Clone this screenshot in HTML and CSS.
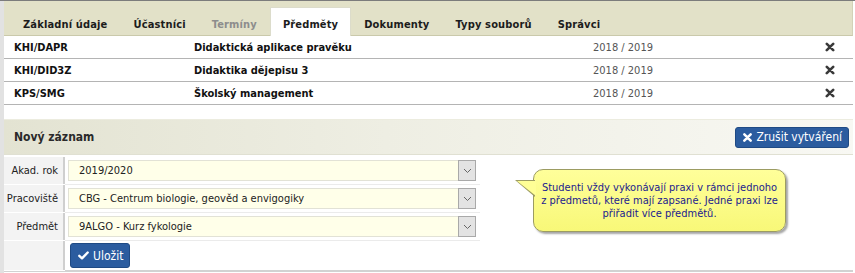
FILE: index.html
```html
<!DOCTYPE html>
<html lang="cs">
<head>
<meta charset="utf-8">
<title>Předměty</title>
<link rel="stylesheet" href="styles.css">
</head>
<body>
<div class="page">
  <nav class="tabs">
    <span class="tab">Základní údaje</span>
    <span class="tab">Účastníci</span>
    <span class="tab disabled">Termíny</span>
    <span class="tab active">Předměty</span>
    <span class="tab">Dokumenty</span>
    <span class="tab">Typy souborů</span>
    <span class="tab">Správci</span>
  </nav>

  <div class="list">
    <div class="row">
      <span class="code">KHI/DAPR</span>
      <span class="name">Didaktická aplikace pravěku</span>
      <span class="year">2018 / 2019</span>
      <span class="del"><svg width="10" height="10" viewBox="0 0 10 10"><path d="M1.8 1.8L8.2 8.2M8.2 1.8L1.8 8.2" stroke="#3a3a3a" stroke-width="2.6" stroke-linecap="round"/></svg></span>
    </div>
    <div class="row">
      <span class="code">KHI/DID3Z</span>
      <span class="name">Didaktika dějepisu 3</span>
      <span class="year">2018 / 2019</span>
      <span class="del"><svg width="10" height="10" viewBox="0 0 10 10"><path d="M1.8 1.8L8.2 8.2M8.2 1.8L1.8 8.2" stroke="#3a3a3a" stroke-width="2.6" stroke-linecap="round"/></svg></span>
    </div>
    <div class="row">
      <span class="code">KPS/SMG</span>
      <span class="name">Školský management</span>
      <span class="year">2018 / 2019</span>
      <span class="del"><svg width="10" height="10" viewBox="0 0 10 10"><path d="M1.8 1.8L8.2 8.2M8.2 1.8L1.8 8.2" stroke="#3a3a3a" stroke-width="2.6" stroke-linecap="round"/></svg></span>
    </div>
  </div>

  <section class="new">
    <header class="new-head">
      <h2 class="new-title">Nový záznam</h2>
      <button class="btn btn-cancel"><svg width="9" height="9" viewBox="0 0 10 10"><path d="M1.5 1.5L8.5 8.5M8.5 1.5L1.5 8.5" stroke="#fff" stroke-width="2.8" stroke-linecap="round"/></svg>Zrušit vytváření</button>
    </header>
    <div class="new-body">
      <div class="form">
        <div class="frow">
          <div class="flabel">Akad. rok</div>
          <div class="fval"><div class="select"><span class="sel-text">2019/2020</span><span class="sel-arrow"><svg width="9" height="6" viewBox="0 0 9 6"><path d="M1 1L4.5 4.5L8 1" fill="none" stroke="#666" stroke-width="1"/></svg></span></div></div>
        </div>
        <div class="frow">
          <div class="flabel">Pracoviště</div>
          <div class="fval"><div class="select"><span class="sel-text">CBG - Centrum biologie, geověd a envigogiky</span><span class="sel-arrow"><svg width="9" height="6" viewBox="0 0 9 6"><path d="M1 1L4.5 4.5L8 1" fill="none" stroke="#666" stroke-width="1"/></svg></span></div></div>
        </div>
        <div class="frow">
          <div class="flabel">Předmět</div>
          <div class="fval"><div class="select"><span class="sel-text">9ALGO - Kurz fykologie</span><span class="sel-arrow"><svg width="9" height="6" viewBox="0 0 9 6"><path d="M1 1L4.5 4.5L8 1" fill="none" stroke="#666" stroke-width="1"/></svg></span></div></div>
        </div>
        <div class="frow last">
          <div class="flabel"></div>
          <div class="fval"><button class="btn btn-save"><svg width="11" height="9" viewBox="0 0 11 9"><path d="M1.3 4.8L4 7.3L9.7 1.5" fill="none" stroke="#fff" stroke-width="2.4" stroke-linecap="round" stroke-linejoin="round"/></svg>Uložit</button></div>
        </div>
      </div>
      <div class="tip">
        <span class="tip-line">Studenti vždy vykonávají praxi v rámci jednoho</span>
        <span class="tip-line">z předmetů, které mají zapsané. Jedné praxi lze</span>
        <span class="tip-line">přiřadit více předmětů.</span>
      </div>
    </div>
  </section>
</div>
</body>
</html>
```

FILE: styles.css
```css
* { box-sizing: border-box; }

html, body {
  margin: 0;
  padding: 0;
  background: #fff;
}

body {
  font-family: "DejaVu Sans Condensed", "DejaVu Sans", sans-serif;
  font-stretch: condensed;
  font-size: 11px;
  color: #111;
  border-top: 1px solid #7c7c7c;
  height: 273px;
  overflow: hidden;
}

.page {
  width: 853px;
  border-left: 4px solid #e2e2e2;
  min-height: 272px;
}

/* Tabs */
.tabs {
  display: flex;
  background: #e2e1c8;
  border-bottom: 1px solid #cac9ab;
  border-right: 1px solid #d3d2b8;
  padding: 6px 0 0 6px;
  height: 35px;
}

.tab {
  display: block;
  padding: 10px 12px 3px;
  line-height: 14px;
  border: 1px solid transparent;
  border-bottom: 0;
  font-weight: bold;
  letter-spacing: 0.15px;
  color: #1c1c1c;
  white-space: nowrap;
}

.tab.disabled { color: #8d8d8d; }

.tab.active {
  background: #fff;
  border-color: #dcdccb;
  margin-bottom: -1px;
  position: relative;
}

/* List */
.list { display: block; }

.row {
  display: grid;
  grid-template-columns: 180px 399px 227px 43px;
  align-items: center;
  height: 23px;
  border-bottom: 1px solid #b4b4b4;
}

.code, .name {
  padding-left: 10px;
  font-weight: bold;
  color: #111;
}

.year {
  padding-left: 10px;
  color: #555;
}

.del {
  display: flex;
  justify-content: center;
  align-items: center;
  padding-right: 4px;
}

/* New record section */
.new {
  margin-top: 14px;
  border-bottom: 2px solid #d2d2d2;
}

.new-head {
  display: flex;
  align-items: center;
  justify-content: space-between;
  height: 36px;
  padding: 0 4px 0 10px;
  border-top: 1px solid #ececdf;
  border-bottom: 1px solid #e0e0d2;
  background: linear-gradient(to right, #e3e3d2 0%, #eeeee3 45%, #f8f8f3 100%);
}

.new-title {
  margin: 0;
  font-size: 12px;
  font-weight: bold;
  color: #2a2a2a;
}

.btn {
  display: inline-flex;
  align-items: center;
  gap: 4px;
  font-family: inherit;
  font-stretch: condensed;
  font-size: 12px;
  color: #fff;
  background: #2b5c9f;
  border: 1px solid #1f4a84;
  border-radius: 3px;
  cursor: pointer;
}

.btn-cancel {
  height: 21px;
  padding: 0 6px 0 7px;
}

.btn-save {
  height: 25px;
  padding: 0 6px 0 7px;
  margin-left: 2px;
}

.new-body {
  display: flex;
  align-items: flex-start;
  padding-top: 2px;
}

.form {
  width: 476px;
  display: flex;
  flex-direction: column;
}

.frow {
  display: flex;
  height: 28px;
  border-bottom: 1px solid #ebebeb;
}

.frow.last {
  height: 29px;
  border-bottom: 0;
}

.flabel {
  width: 61px;
  flex: none;
  background: #f3f3f3;
  border-right: 2px solid #cfcfcf;
  text-align: right;
  padding: 7px 5px 0 0;
  color: #222;
  box-shadow: 0 1px 0 #fff;
}

.fval {
  flex: 1;
  display: flex;
  align-items: center;
  padding-left: 3px;
}

.frow.last .fval { align-items: flex-start; padding-top: 2px; }

.select {
  display: flex;
  align-items: stretch;
  width: 408px;
  height: 21px;
  background: #ffffe9;
  border: 1px solid #e2e2d6;
  border-right: 0;
}

.sel-text {
  flex: 1;
  padding-left: 10px;
  line-height: 19px;
  color: #222;
}

.sel-arrow {
  width: 18px;
  display: flex;
  align-items: center;
  justify-content: center;
  background: #e3e3e3;
  border: 1px solid #a9a9a9;
  margin: -1px 0;
}

/* Tooltip */
.tip {
  position: relative;
  display: flex;
  flex-direction: column;
  align-items: center;
  margin: 12px 0 0 53px;
  width: 253px;
  height: 63px;
  padding: 11px 2px 0;
  line-height: 13px;
  color: #1b1b8e;
  background: linear-gradient(to bottom, #ffff9a, #f8f878);
  border: 1px solid #9c9c62;
  border-radius: 10px;
  box-shadow: 2px 2px 2px rgba(0, 0, 0, 0.35);
}

.tip-line { white-space: nowrap; }

.tip::before {
  content: "";
  position: absolute;
  left: -19px;
  top: 10px;
  width: 0;
  height: 0;
  border-style: solid;
  border-width: 0 20px 17px 0;
  border-color: transparent #9c9c62 transparent transparent;
}

.tip::after {
  content: "";
  position: absolute;
  left: -17px;
  top: 11px;
  width: 0;
  height: 0;
  border-style: solid;
  border-width: 0 19px 15px 0;
  border-color: transparent #ffff96 transparent transparent;
}
```
